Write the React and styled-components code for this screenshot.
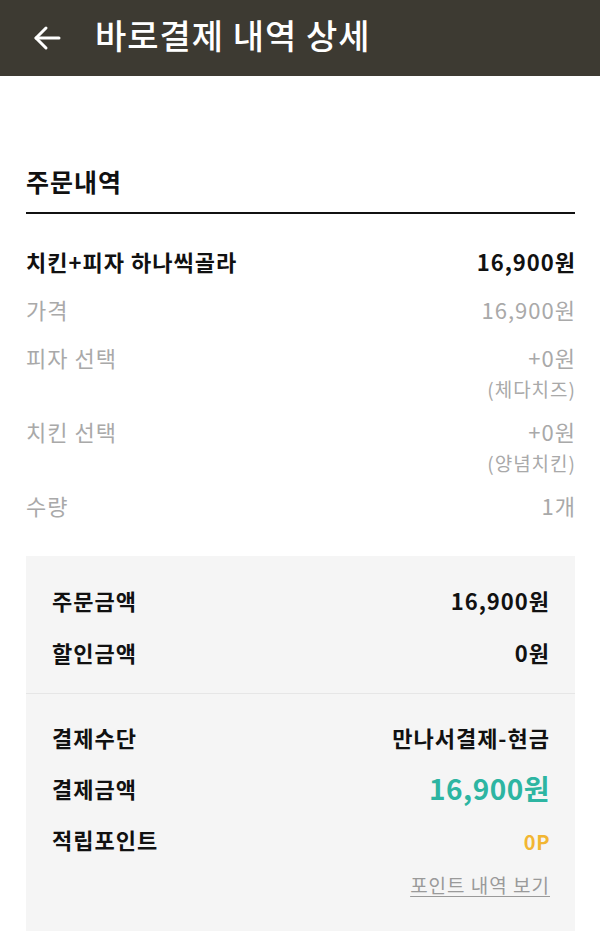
import React from 'react';
import styled, { createGlobalStyle } from 'styled-components';

const GlobalStyle = createGlobalStyle`
	html, body {
		margin: 0;
		padding: 0;
		background: #fff;
	}
	body {
		font-family: "Noto Sans CJK KR", "Noto Sans", sans-serif;
		color: #111;
	}
`

const Header = styled.header`
	display: flex;
	align-items: center;
	height: 76px;
	padding: 0 0 0 33px;
	background: #3d3a32;
	color: #fff;
	box-sizing: border-box;
`

const BackButton = styled.button`
	display: flex;
	align-items: center;
	justify-content: center;
	width: 28px;
	height: 28px;
	padding: 0;
	margin-right: 34px;
	border: 0;
	background: transparent;
	cursor: pointer;
`

const Title = styled.h1`
	margin: 0;
	font-size: 34px;
	font-weight: 500;
	letter-spacing: 1px;
	line-height: 1;
	padding-bottom: 6px;
`

const Section = styled.section`
	padding: 0 25px 0 26px;
	margin-top: 90px;
	margin-bottom: 36px;
`

const SectionTitle = styled.h2`
	margin: 0;
	font-size: 25px;
	font-weight: 700;
	letter-spacing: 1px;
	line-height: 30px;
	padding-bottom: 16px;
	border-bottom: 2px solid #111;
`

const Rows = styled.div`
	display: flex;
	flex-direction: column;
	gap: ${p => p.$gap || 18}px;
	padding-top: ${p => p.$top || 0}px;
`

const Row = styled.div`
	display: flex;
	justify-content: space-between;
	align-items: ${p => p.$align || 'flex-start'};
	font-size: 22px;
	line-height: 30px;
	letter-spacing: 1px;
	font-weight: ${p => (p.$bold ? 700 : 400)};
	color: ${p => (p.$muted ? '#a9a9a9' : '#111')};
`

const Label = styled.span``

const Value = styled.div`
	display: flex;
	flex-direction: column;
	align-items: flex-end;
	text-align: right;
	margin-right: -1px;
`

const Sub = styled.span`
	font-size: 19px;
	line-height: 26px;
	margin-top: 4px;
	margin-bottom: -4px;
`

const Summary = styled.div`
	margin: 0 25px 20px 26px;
	background: #f5f5f5;
`

const Block = styled.div`
	padding: ${p => p.$pad};
	& + & {
		border-top: 1px solid #e6e6e6;
	}
`

const Amount = styled.span`
	font-size: ${p => p.$size || 22}px;
	line-height: ${p => p.$lh || 30}px;
	letter-spacing: ${p => (p.$size ? 0.5 : 1)}px;
	margin-right: -1px;
	color: ${p => p.$color || '#111'};
	font-weight: 700;
`

const LinkRow = styled.div`
	display: flex;
	justify-content: flex-end;
	margin-top: 12px;
`

const PointLink = styled.a`
	font-size: 19px;
	line-height: 26px;
	letter-spacing: 1px;
	margin-right: -1px;
	color: #9a9a9a;
	text-decoration: underline;
	text-underline-offset: 3px;
	cursor: pointer;
`

const BackArrow = () => (
	<svg width="28" height="28" viewBox="0 0 28 28" fill="none" stroke="#fff" strokeWidth="3" strokeLinecap="round" strokeLinejoin="round">
		<path d="M26 14H3" />
		<path d="M13 4L3 14l10 10" />
	</svg>
)

const options = [
	{ label: '가격', value: '16,900원' },
	{ label: '피자 선택', value: '+0원', sub: '(체다치즈)' },
	{ label: '치킨 선택', value: '+0원', sub: '(양념치킨)' },
	{ label: '수량', value: '1개' },
]

const App = () => {
	return (
		<>
			<GlobalStyle />
			<Header>
				<BackButton aria-label="뒤로">
					<BackArrow />
				</BackButton>
				<Title>바로결제 내역 상세</Title>
			</Header>

			<Section>
				<SectionTitle>주문내역</SectionTitle>
				<Rows $top={32}>
					<Row $bold>
						<Label>치킨+피자 하나씩골라</Label>
						<Value>16,900원</Value>
					</Row>
					{options.map(o => (
						<Row $muted key={o.label}>
							<Label>{o.label}</Label>
							<Value>
								<span>{o.value}</span>
								{o.sub && <Sub>{o.sub}</Sub>}
							</Value>
						</Row>
					))}
				</Rows>
			</Section>

			<Summary>
				<Block $pad="29px 26px 26px">
					<Rows $gap={22}>
						<Row $bold>
							<Label>주문금액</Label>
							<Amount>16,900원</Amount>
						</Row>
						<Row $bold>
							<Label>할인금액</Label>
							<Amount>0원</Amount>
						</Row>
					</Rows>
				</Block>
				<Block $pad="28px 26px 33px">
					<Rows $gap={18}>
						<Row $bold>
							<Label>결제수단</Label>
							<Amount>만나서결제-현금</Amount>
						</Row>
						<Row $bold $align="center">
							<Label>결제금액</Label>
							<Amount $size={28} $lh={36} $color="#2db5a2">16,900원</Amount>
						</Row>
						<Row $bold>
							<Label>적립포인트</Label>
							<Amount $size={20} $lh={36} $color="#f2b632">0P</Amount>
						</Row>
					</Rows>
					<LinkRow>
						<PointLink>포인트 내역 보기</PointLink>
					</LinkRow>
				</Block>
			</Summary>
		</>
	)
}

export default App
